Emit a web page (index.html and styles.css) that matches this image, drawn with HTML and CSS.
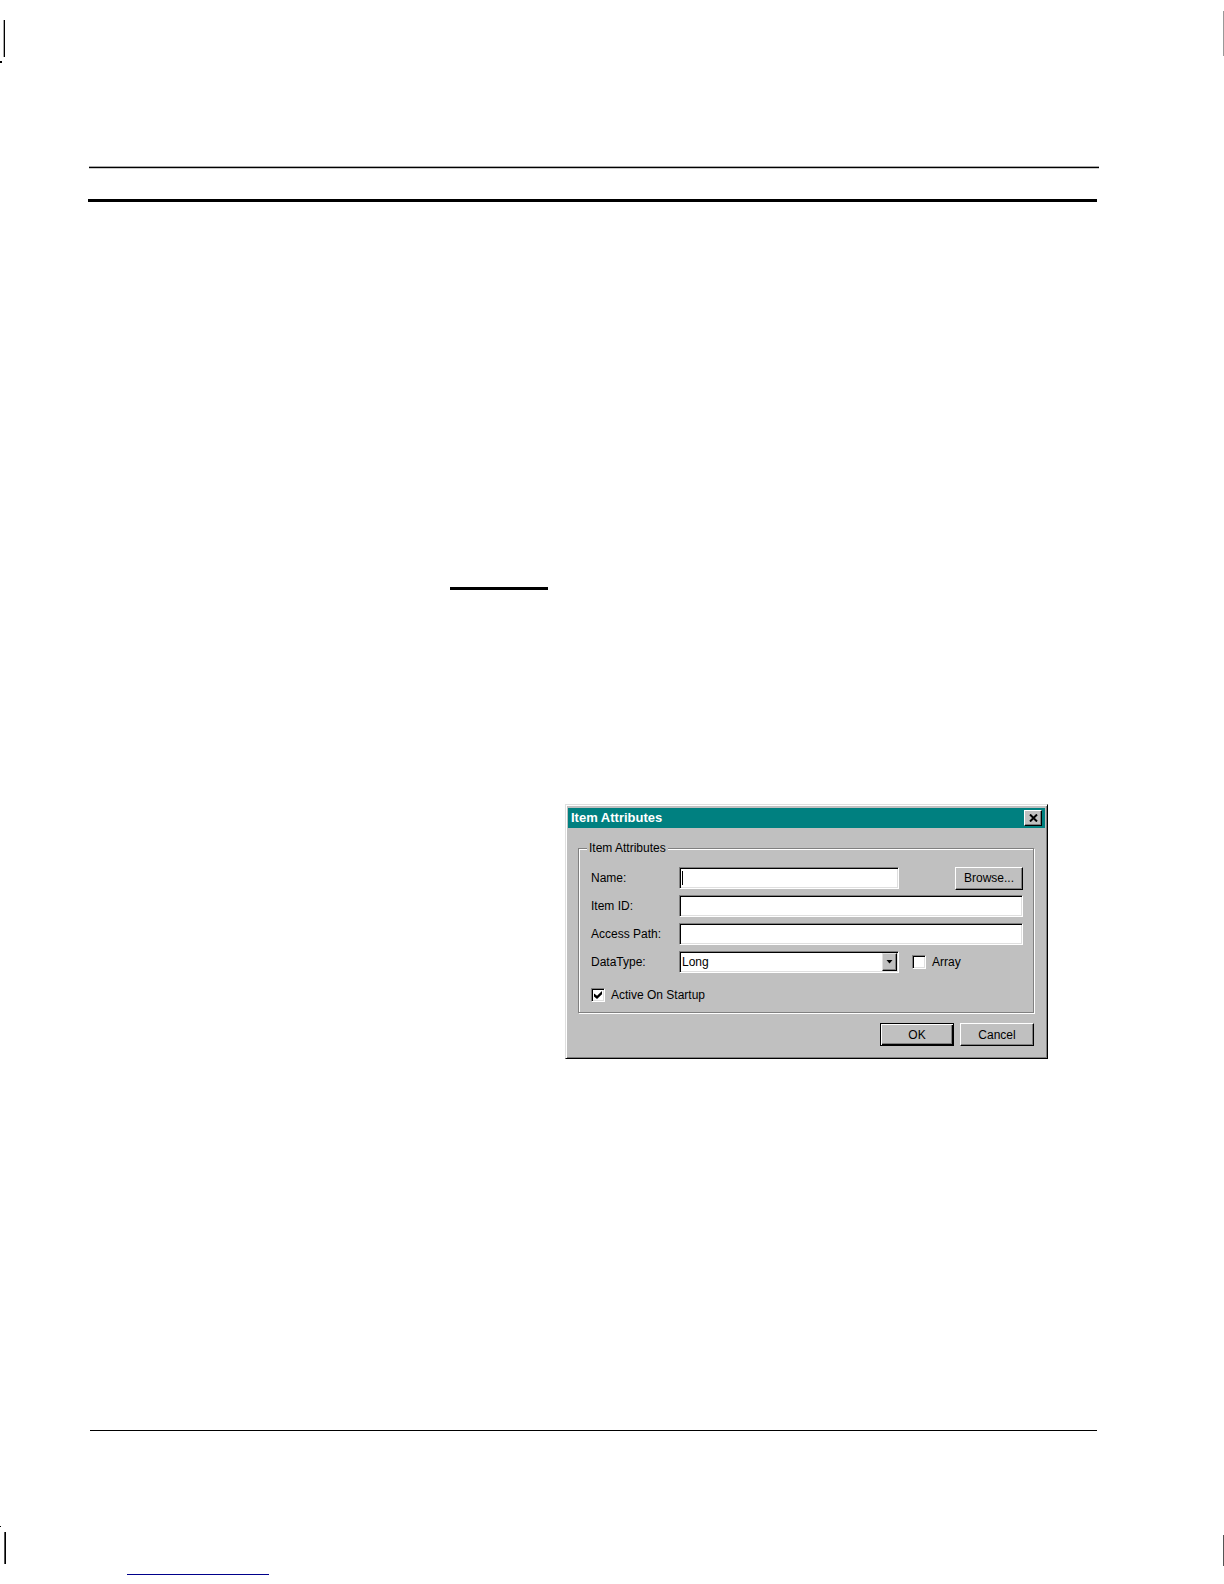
FILE: index.html
```html
<!DOCTYPE html>
<html lang="en">
<head>
    <meta charset="UTF-8">
    <meta name="viewport" content="width=device-width, initial-scale=1.0">
    <title>Item Attributes</title>
    <link rel="stylesheet" href="styles.css">
</head>
<body>
    <header class="marks marks-top">
        <div class="marks-left">
            <div class="mark"></div>
            <div class="dot"></div>
        </div>
        <div class="mark-edge"></div>
    </header>

    <main class="sheet">
        <div class="rule rule-soft"></div>
        <div class="rule rule-thick"></div>
        <div class="rule rule-short"></div>

        <form class="dialog">
            <div class="titlebar">
                <h1>Item Attributes</h1>
                <button type="button" class="close" aria-label="Close">
                    <svg width="9" height="8" viewBox="0 0 9 8">
                        <path d="M1 0.5L8 7.5M8 0.5L1 7.5" stroke="#000" stroke-width="2" fill="none"/>
                    </svg>
                </button>
            </div>

            <fieldset>
                <legend>Item Attributes</legend>
                <div class="fields">
                    <div class="row">
                        <label for="name">Name:</label>
                        <input type="text" id="name" class="short caret">
                        <button type="button" class="btn browse">Browse...</button>
                    </div>
                    <div class="row">
                        <label for="itemId">Item ID:</label>
                        <input type="text" id="itemId">
                    </div>
                    <div class="row">
                        <label for="accessPath">Access Path:</label>
                        <input type="text" id="accessPath">
                    </div>
                    <div class="row">
                        <label for="dataType">DataType:</label>
                        <div class="select short">
                            <select id="dataType">
                                <option>Long</option>
                            </select>
                            <span class="arrow">
                                <svg width="7" height="4" viewBox="0 0 7 4">
                                    <path d="M0.5 0H6.5L3.5 3.5Z" fill="#000"/>
                                </svg>
                            </span>
                        </div>
                        <div class="check array">
                            <input type="checkbox" id="array">
                            <label for="array">Array</label>
                        </div>
                    </div>
                    <div class="check startup">
                        <input type="checkbox" id="startup" checked>
                        <label for="startup">Active On Startup</label>
                    </div>
                </div>
            </fieldset>

            <div class="actions">
                <button type="button" class="btn default">OK</button>
                <button type="button" class="btn">Cancel</button>
            </div>
        </form>

        <div class="rule rule-thin"></div>
    </main>

    <footer>
        <div class="marks marks-bottom">
            <div class="marks-left">
                <div class="dot"></div>
                <div class="mark"></div>
            </div>
            <div class="mark-edge"></div>
        </div>
        <div class="link-line"></div>
    </footer>
</body>
</html>
```

FILE: styles.css
```css
* {
    box-sizing: border-box;
}
body {
    margin: 0;
    background: #fff;
    color: #000;
    font-family: "Liberation Sans", Arial, sans-serif;
    font-size: 12px;
    line-height: 16px;
}

/* crop marks */
.marks {
    display: flex;
    justify-content: space-between;
}
.marks-top {
    padding-top: 11px;
    align-items: flex-start;
}
.marks-top .marks-left {
    padding-top: 9px;
}
.marks-bottom {
    align-items: flex-end;
}
.marks-bottom .marks-left {
    padding-bottom: 2px;
}
.mark {
    width: 2px;
    height: 37px;
    margin-left: 3px;
    background: #000;
    border-left: 1px solid #aaa;
}
.dot {
    width: 2px;
    height: 2px;
    margin-top: 4px;
    background: #000;
}
.mark-edge {
    width: 1px;
    height: 45px;
    background: #999;
}
.marks-bottom .mark {
    height: 32px;
    margin: 5px 0 0 4px;
    border-color: #555;
}
.marks-bottom .dot {
    width: 1px;
    height: 1px;
    margin-top: 0;
}
.marks-bottom .mark-edge {
    height: 31px;
    background: #555;
}

/* sheet */
.sheet {
    padding: 103px 127px 0 88px;
}
.rule {
    height: 1px;
    background: #000;
}
.rule-soft {
    height: 3px;
    margin: 0 -2px 0 1px;
    border-top: 1px solid #aaa;
    border-bottom: 1px solid #ccc;
}
.rule-thick {
    height: 3px;
    margin-top: 30px;
}
.rule-short {
    width: 98px;
    height: 3px;
    margin: 385px 0 0 362px;
}
.rule-thin {
    margin: 371px 0 0 2px;
}
.link-line {
    width: 142px;
    height: 1px;
    margin: 8px 0 8px 127px;
    background: #00008b;
}
footer {
    padding-top: 95px;
}

/* dialog */
.dialog {
    width: 483px;
    margin: 214px 0 0 477px;
    padding: 1px 1px 12px;
    background: #c0c0c0;
    border: 1px solid;
    border-color: #dfdfdf #000 #000 #dfdfdf;
    box-shadow: inset 1px 1px 0 #fff, inset -1px -1px 0 #808080;
}
.titlebar {
    display: flex;
    align-items: center;
    justify-content: space-between;
    height: 20px;
    margin: 2px 1px 0;
    padding: 0 3px;
    background: #008080;
}
h1 {
    margin: 0;
    color: #fff;
    font-size: 13px;
    line-height: 16px;
}
button {
    padding: 0;
    background: #c0c0c0;
    color: #000;
    font: inherit;
    border: 1px solid;
    border-color: #fff #000 #000 #fff;
    border-radius: 0;
    box-shadow: inset -1px -1px 0 #808080;
}
.close {
    display: flex;
    align-items: center;
    justify-content: center;
    width: 18px;
    height: 16px;
}
fieldset {
    min-width: 0;
    margin: 12px 12px 0 11px;
    padding: 0 8px;
    border: 1px solid #808080;
    box-shadow: 1px 1px 0 #fff, inset 1px 1px 0 #fff;
}
legend {
    padding: 0 2px;
    background: #c0c0c0;
}
.fields {
    display: flex;
    flex-direction: column;
    gap: 6px;
    padding: 11px 2px 9px 4px;
}
.row {
    display: flex;
    align-items: center;
    height: 22px;
}
.row > label {
    width: 88px;
    flex: none;
}
input[type="text"], select {
    flex: 1;
    min-width: 0;
    height: 22px;
    padding: 0 2px;
    background: #fff;
    color: #000;
    font: inherit;
    border: 1px solid;
    border-color: #808080 #fff #fff #808080;
    border-radius: 0;
    box-shadow: inset 1px 1px 0 #000, inset -1px -1px 0 #dfdfdf;
    outline: none;
}
.row .short {
    flex: none;
    width: 220px;
}
.row .caret {
    background: linear-gradient(#000, #000) 2px 3px / 1px 14px no-repeat #fff;
}
.select {
    position: relative;
    display: flex;
}
select {
    appearance: none;
}
.arrow {
    position: absolute;
    top: 2px;
    right: 2px;
    display: flex;
    align-items: center;
    justify-content: center;
    width: 15px;
    height: 18px;
    background: #c0c0c0;
    border: 1px solid;
    border-color: #dfdfdf #000 #000 #dfdfdf;
    box-shadow: inset -1px -1px 0 #808080;
    pointer-events: none;
}
.btn {
    width: 74px;
    height: 23px;
}
.browse {
    width: 68px;
    margin-left: auto;
}
.check {
    display: flex;
    align-items: center;
    gap: 6px;
}
.array {
    margin-left: 13px;
}
.startup {
    margin-top: 8px;
}
input[type="checkbox"] {
    appearance: none;
    width: 14px;
    height: 14px;
    margin: 0;
    background: #fff;
    border: 1px solid;
    border-color: #808080 #fff #fff #808080;
    box-shadow: inset 1px 1px 0 #000, inset -1px -1px 0 #dfdfdf;
}
input[type="checkbox"]:checked::before {
    content: "";
    display: block;
    width: 8px;
    height: 8px;
    margin: 2px;
    background: #000;
    clip-path: polygon(0 30%, 38% 60%, 100% 0, 100% 40%, 38% 100%, 0 70%);
}
.actions {
    display: flex;
    justify-content: flex-end;
    gap: 6px;
    margin-top: 10px;
    padding-right: 12px;
}
.default {
    border-color: #000;
    box-shadow: inset 1px 1px 0 #fff, inset -1px -1px 0 #000, inset -2px -2px 0 #808080;
}
```
